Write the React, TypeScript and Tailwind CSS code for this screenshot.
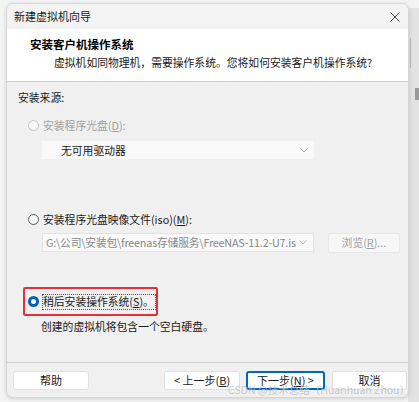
const font = { fontFamily: '"Noto Sans CJK SC", "Noto Sans", sans-serif' }

const Radio = ({ checked, disabled }: { checked?: boolean; disabled?: boolean }) => {
  if (checked) {
    return (
      <span className="flex h-[11px] w-[11px] shrink-0 items-center justify-center rounded-full bg-[#005fb8]">
        <span className="h-[5px] w-[5px] rounded-full bg-white" />
      </span>
    )
  }
  return (
    <span
      className={
        "h-[11px] w-[11px] shrink-0 rounded-full border bg-[#f7f7f7] " +
        (disabled ? "border-[#c4c4c4]" : "border-[#5a5a5a]")
      }
    />
  )
}

const Chevron = () => (
  <svg width="8" height="5" viewBox="0 0 8 5" className="shrink-0">
    <path d="M0.5 0.5 L4 4 L7.5 0.5" fill="none" stroke="#b0b0b0" strokeWidth="0.8" />
  </svg>
)

const Btn = ({ children, primary, w }: { children: React.ReactNode; primary?: boolean; w: string }) => (
  <button
    className={
      "flex h-[19px] items-center justify-center whitespace-nowrap rounded-[3px] bg-white text-[11px] text-[#1b1b1b] " +
      w +
      (primary ? " border-2 border-[#0067c0]" : " border border-[#e0e0e0]")
    }
  >
    {children}
  </button>
)

export default function App() {
  return (
    <div className="relative h-[402px] w-[419px] overflow-hidden bg-[#f4f4f4] text-[10.8px]" style={font}>
      {/* window behind on the right */}
      <div className="absolute right-0 top-[8px] h-[394px] w-[11px] bg-[#e3e3e3]">
        <span className="absolute left-[2px] top-[30px] h-[30px] w-[1px] bg-[#bdbdbd]" />
        <span className="absolute left-[7px] top-[80px] h-[12px] w-[4px] bg-[#9a9a9a]" />
      </div>

      <div className="relative ml-[6px] mt-[3px] flex h-[395px] w-[403px] flex-col overflow-hidden rounded-[7px] border border-[#d6d6d6] bg-[#f0f0f0] shadow-[0_1px_4px_rgba(0,0,0,0.15)]">
        {/* title bar */}
        <div className="flex h-[25px] shrink-0 items-center justify-between bg-[#f3f3f3] pl-[7px] pr-[8px]">
          <span className="text-[11px] text-[#1a1a1a]">新建虚拟机向导</span>
          <svg width="10" height="10" viewBox="0 0 10 10">
            <path d="M0.5 0.5 L9.5 9.5 M9.5 0.5 L0.5 9.5" stroke="#333" strokeWidth="0.9" />
          </svg>
        </div>

        {/* header */}
        <div className="flex h-[53px] shrink-0 flex-col border-b border-[#cfcfcf] bg-white pl-[23px] pt-[6px]">
          <span className="text-[11.5px] font-bold leading-[18px] text-[#000]">安装客户机操作系统</span>
          <span className="pl-[24px] leading-[18px] text-[#1a1a1a]">
            虚拟机如同物理机，需要操作系统。您将如何安装客户机操作系统?
          </span>
        </div>

        {/* body */}
        <div className="flex flex-1 flex-col pl-[11px] pt-[7px]">
          <span className="h-[16px] leading-[16px] text-[#1a1a1a]">安装来源:</span>

          <div className="ml-[10px] mt-[12px] flex h-[16px] items-center gap-[4px] text-[#a0a0a0]">
            <Radio disabled />
            <span>
              安装程序光盘(<span className="underline">D</span>):
            </span>
          </div>

          <div className="ml-[24px] mt-[8px] flex h-[18px] w-[272px] items-center justify-between bg-[#f9f9f9] pl-[19px] pr-[6px]">
            <span className="text-[#1a1a1a]">无可用驱动器</span>
            <Chevron />
          </div>

          <div className="ml-[10px] mt-[52px] flex h-[16px] items-center gap-[4px] text-[#1a1a1a]">
            <Radio />
            <span>
              安装程序光盘映像文件(iso)(<span className="underline">M</span>):
            </span>
          </div>

          <div className="ml-[24px] mt-[6px] flex h-[19px] items-center gap-[14px]">
            <div className="flex h-[19px] w-[272px] items-center justify-between overflow-hidden border border-[#e3e3e3] bg-[#f9f9f9] pl-[3px] pr-[6px]">
              <span className="whitespace-nowrap text-[10.8px] tracking-[-0.2px] text-[#8a8a8a]">
                G:\公司\安装包\freenas存储服务\FreeNAS-11.2-U7.is
              </span>
              <Chevron />
            </div>
            <div className="flex h-[20px] w-[72px] items-center justify-center rounded-[3px] border border-[#e8e8e8] bg-[#f7f7f7] text-[#a0a0a0]">
              浏览(<span className="underline">R</span>)...
            </div>
          </div>

          <div className="ml-[5px] mt-[35px] flex h-[29px] w-fit items-center rounded-[2px] border-2 border-[#e5303a] pl-[3px]">
            <Radio checked />
            <span className="ml-[3px] flex h-[16px] items-center whitespace-nowrap border border-dotted border-[#555] pr-[1px] text-[#1a1a1a]">
              稍后安装操作系统(<span className="underline">S</span>)。
            </span>
          </div>

          <span className="ml-[23px] mt-[2px] h-[16px] leading-[16px] text-[#1a1a1a]">
            创建的虚拟机将包含一个空白硬盘。
          </span>
        </div>

        {/* footer */}
        <div className="flex h-[35px] shrink-0 items-start border-t border-[#d0d0d0] pl-[6px] pt-[8px]">
          <Btn w="w-[76px]">帮助</Btn>
          <Btn w="w-[76px] ml-[75px]">
            &lt; 上一步(<span className="underline">B</span>)
          </Btn>
          <Btn primary w="w-[79px] ml-[6px]">
            下一步(<span className="underline">N</span>) &gt;
          </Btn>
          <Btn w="w-[75px] ml-[7px]">取消</Btn>
        </div>

        {/* watermark */}
        <span className="pointer-events-none absolute bottom-[0px] right-[-2px] whitespace-nowrap text-[10.5px] leading-[14px] text-[#bcbcbc]/80">
          CSDN @技术总结（Huanhuan Zhou）
        </span>
      </div>
    </div>
  )
}
